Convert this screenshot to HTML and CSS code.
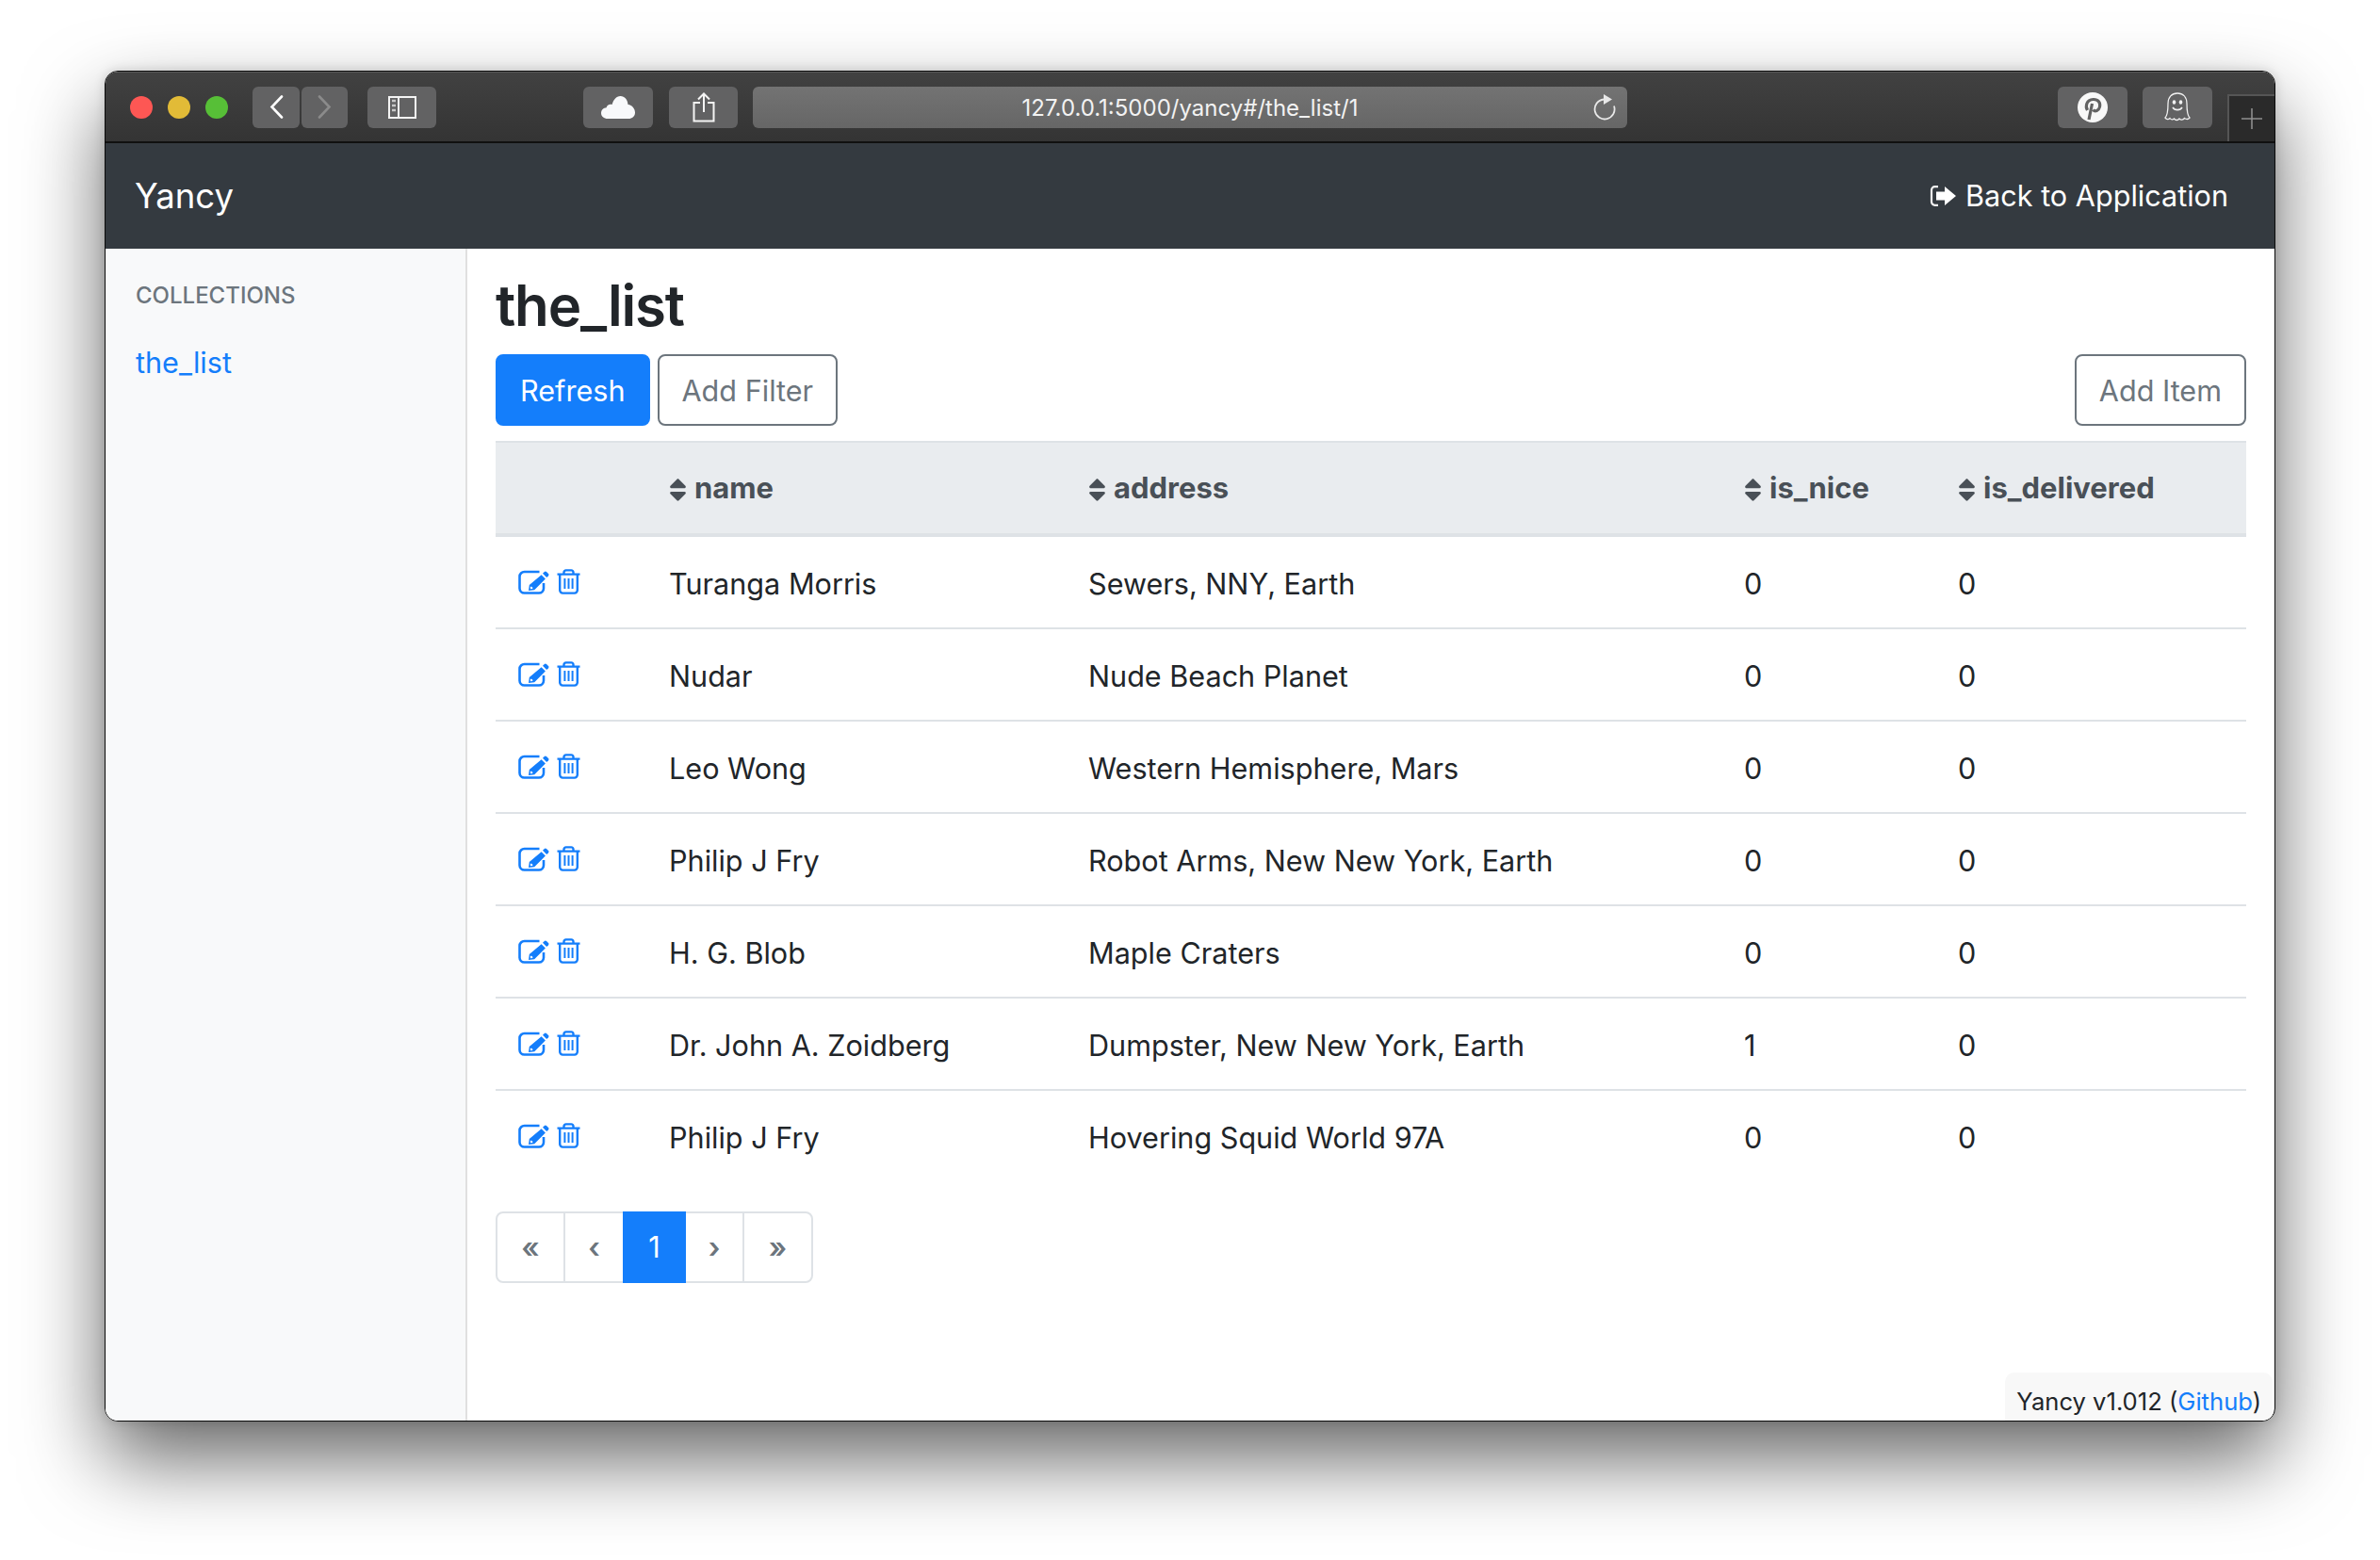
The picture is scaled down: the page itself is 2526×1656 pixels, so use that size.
FILE: index.html
```html
<!DOCTYPE html>
<html lang="en">
<head>
    <meta charset="UTF-8">
    <title>Yancy</title>
    <link rel="stylesheet" href="styles.css">
</head>
<body>
    <svg class="sprites" width="0" height="0">
        <symbol id="icon-edit" viewBox="0 0 33 26">
            <path d="M22.5 2H6.5A5 5 0 0 0 1.5 7V19.5a5 5 0 0 0 5 5H22a5 5 0 0 0 5-5V14" fill="none" stroke="currentColor" stroke-width="2.6"/>
            <path d="M24.6 5.2L28.9 9.5 17.2 21.2 11 22 11.8 16.1ZM12.8 18.2L13 20.2 15 20 15.6 19 13.8 17.6Z" fill="currentColor" fill-rule="evenodd"/>
            <path d="M26 3.8L27.8 2a1.6 1.6 0 0 1 2.2 0L32 4a1.6 1.6 0 0 1 0 2.2L30.2 8Z" fill="currentColor"/>
        </symbol>
        <symbol id="icon-trash" viewBox="0 0 25 27">
            <path d="M.5 5.6H24.5M7.5 5V3.6a2.2 2.2 0 0 1 2.2-2.2h5.6a2.2 2.2 0 0 1 2.2 2.2V5M3.2 5.6V22.6a3 3 0 0 0 3 3H18.8a3 3 0 0 0 3-3V5.6" fill="none" stroke="currentColor" stroke-width="2.4"/>
            <path d="M8.4 10V21M12.5 10V21M16.6 10V21" fill="none" stroke="currentColor" stroke-width="2"/>
        </symbol>
        <symbol id="icon-sort" viewBox="0 0 320 512">
            <path d="M41 288h238c21.4 0 32.1 25.9 17 41L177 448c-9.4 9.4-24.6 9.4-33.9 0L24 329c-15.1-15.1-4.4-41 17-41zm255-105L177 64c-9.4-9.4-24.6-9.4-33.9 0L24 183c-15.1 15.1-4.4 41 17 41h238c21.4 0 32.1-25.9 17-41z" fill="currentColor"/>
        </symbol>
    </svg>

    <div class="window">
        <div class="toolbar">
            <div class="lights">
                <span class="light red"></span>
                <span class="light yellow"></span>
                <span class="light green"></span>
            </div>
            <div class="tool tool-back">
                <svg width="15" height="25" viewBox="0 0 15 25"><path d="M13 1.5L2.5 12.5 13 23.5" fill="none" stroke="#fff" stroke-width="2.6" stroke-linecap="round"/></svg>
            </div>
            <div class="tool tool-forward">
                <svg width="15" height="25" viewBox="0 0 15 25"><path d="M2 1.5L12.5 12.5 2 23.5" fill="none" stroke="#8b8b8b" stroke-width="2.6" stroke-linecap="round"/></svg>
            </div>
            <div class="tool tool-sidebar">
                <svg width="30" height="24" viewBox="0 0 30 24"><path d="M1 1H29V23H1ZM11 1V23" fill="none" stroke="#f4f4f4" stroke-width="2"/><path d="M4 5H8M4 10H8M4 15H8" stroke="#c8c8c8" stroke-width="2.4"/></svg>
            </div>
            <div class="tool tool-cloud">
                <svg width="36" height="24" viewBox="0 0 36 24"><path d="M7 24C3 24 0 21.5 0 18 0 14.8 2.5 12.4 5.6 12.2 6.2 9.4 9 8 11.6 9 13 4 16 0 20.5 0 25 0 28 3.5 28.5 9 33 9.6 36 13.4 36 17.5 36 21.5 33 24 29 24Z" fill="#f8f9fb"/></svg>
            </div>
            <div class="tool tool-share">
                <svg width="24" height="32" viewBox="0 0 24 32"><path d="M8 11H1.5V30.5H22.5V11H16M12 21V2M6 7.5L12 1.5 18 7.5" fill="none" stroke="#f4f4f4" stroke-width="2"/></svg>
            </div>
            <div class="address">
                <span class="url">127.0.0.1:5000/yancy#/the_list/1</span>
                <svg class="reload" width="24" height="28" viewBox="0 0 24 28"><path d="M11 5.5A10.5 10.5 0 1 0 22 12.5" fill="none" stroke="#e8e8e8" stroke-width="1.8"/><path d="M11 0L20 5.5 11 11Z" fill="#e8e8e8"/></svg>
            </div>
            <div class="tool tool-pin">
                <svg width="32" height="32" viewBox="0 0 32 32"><circle cx="16" cy="16" r="16" fill="#f8f8f8"/><path d="M10.5 19C8 14.5 9.5 8 16.5 7.5 22 7.2 24.5 11 23.5 15.5 22.6 19.5 18.5 21 16.5 18.5M15.5 12L12 29" fill="none" stroke="#636363" stroke-width="3.2"/></svg>
            </div>
            <div class="tool tool-ghost">
                <svg width="28" height="31" viewBox="0 0 28 31"><path d="M1 27C3 25 4 22 4 12 4 5 8 1 14 1S24 5 24 12C24 22 25 25 27 27 25 29.5 23 28.5 21.5 27.5 20 29.5 17.5 29.5 16 28 14.5 30 12 30 10.5 28 9 29.5 7 29 6 27.5 4.5 29 2.5 29 1 27Z" fill="none" stroke="#f0f0f0" stroke-width="1.3"/><ellipse cx="10.5" cy="10.5" rx="1.8" ry="2.2" fill="#f0f0f0"/><ellipse cx="17.5" cy="10.5" rx="1.8" ry="2.2" fill="#f0f0f0"/><path d="M9 16C11 19.5 17 19.5 19 16" fill="none" stroke="#f0f0f0" stroke-width="1.6"/></svg>
            </div>
            <div class="new-tab">
                <svg width="22" height="22" viewBox="0 0 22 22"><path d="M11 0V22M0 11H22" stroke="#8f8f8f" stroke-width="1.6"/></svg>
            </div>
        </div>

        <nav class="navbar">
            <a class="brand">Yancy</a>
            <a class="back-link">
                <svg width="28" height="24" viewBox="0 0 28 24"><path d="M9 2.2H5.5A3.5 3.5 0 0 0 2 5.7V18.3a3.5 3.5 0 0 0 3.5 3.5H9" fill="none" stroke="#f4f4f4" stroke-width="2.2"/><path d="M16 2L28 12 16 22V16.5H7V7.5H16Z" fill="#fff"/></svg>
                <span>Back to Application</span>
            </a>
        </nav>

        <div class="layout">
            <aside class="sidebar">
                <h6 class="sidebar-heading">COLLECTIONS</h6>
                <a class="sidebar-link">the_list</a>
            </aside>

            <main class="content">
                <h2 class="title">the_list</h2>
                <div class="actions">
                    <button class="btn btn-primary">Refresh</button>
                    <button class="btn btn-outline">Add Filter</button>
                    <button class="btn btn-outline btn-right">Add Item</button>
                </div>

                <table class="items">
                    <colgroup>
                        <col class="col-tools">
                        <col class="col-name">
                        <col class="col-address">
                        <col class="col-nice">
                        <col class="col-delivered">
                    </colgroup>
                    <thead>
                        <tr>
                            <th></th>
                            <th><svg class="sort"><use href="#icon-sort"/></svg>name</th>
                            <th><svg class="sort"><use href="#icon-sort"/></svg>address</th>
                            <th><svg class="sort"><use href="#icon-sort"/></svg>is_nice</th>
                            <th><svg class="sort"><use href="#icon-sort"/></svg>is_delivered</th>
                        </tr>
                    </thead>
                    <tbody>
                        <tr>
                            <td class="tools"><svg class="edit"><use href="#icon-edit"/></svg><svg class="trash"><use href="#icon-trash"/></svg></td>
                            <td>Turanga Morris</td><td>Sewers, NNY, Earth</td><td>0</td><td>0</td>
                        </tr>
                        <tr>
                            <td class="tools"><svg class="edit"><use href="#icon-edit"/></svg><svg class="trash"><use href="#icon-trash"/></svg></td>
                            <td>Nudar</td><td>Nude Beach Planet</td><td>0</td><td>0</td>
                        </tr>
                        <tr>
                            <td class="tools"><svg class="edit"><use href="#icon-edit"/></svg><svg class="trash"><use href="#icon-trash"/></svg></td>
                            <td>Leo Wong</td><td>Western Hemisphere, Mars</td><td>0</td><td>0</td>
                        </tr>
                        <tr>
                            <td class="tools"><svg class="edit"><use href="#icon-edit"/></svg><svg class="trash"><use href="#icon-trash"/></svg></td>
                            <td>Philip J Fry</td><td>Robot Arms, New New York, Earth</td><td>0</td><td>0</td>
                        </tr>
                        <tr>
                            <td class="tools"><svg class="edit"><use href="#icon-edit"/></svg><svg class="trash"><use href="#icon-trash"/></svg></td>
                            <td>H. G. Blob</td><td>Maple Craters</td><td>0</td><td>0</td>
                        </tr>
                        <tr>
                            <td class="tools"><svg class="edit"><use href="#icon-edit"/></svg><svg class="trash"><use href="#icon-trash"/></svg></td>
                            <td>Dr. John A. Zoidberg</td><td>Dumpster, New New York, Earth</td><td>1</td><td>0</td>
                        </tr>
                        <tr>
                            <td class="tools"><svg class="edit"><use href="#icon-edit"/></svg><svg class="trash"><use href="#icon-trash"/></svg></td>
                            <td>Philip J Fry</td><td>Hovering Squid World 97A</td><td>0</td><td>0</td>
                        </tr>
                    </tbody>
                </table>

                <ul class="pagination">
                    <li class="page page-first">«</li>
                    <li class="page page-prev">‹</li>
                    <li class="page page-current">1</li>
                    <li class="page page-next">›</li>
                    <li class="page page-last">»</li>
                </ul>
            </main>
        </div>

        <div class="version">Yancy v1.012 (<a class="version-link">Github</a>)</div>
    </div>
</body>
</html>
```

FILE: styles.css
```css
* {
    box-sizing: border-box;
}

body {
    margin: 0;
    padding: 75px 111px 0 111px;
    height: 1656px;
    overflow: hidden;
    background-color: #ffffff;
    color: #212529;
    font-family: Inter, "Noto Sans", sans-serif;
    font-size: 30.6px;
    line-height: 48px;
}

.sprites {
    position: absolute;
}

/* Browser window */
.window {
    position: relative;
    width: 2304px;
    height: 1434px;
    border: 1px solid #0a0a0a;
    border-radius: 14px;
    overflow: hidden;
    display: flex;
    flex-direction: column;
    background-color: #ffffff;
    box-shadow: 0 40px 85px rgba(0, 0, 0, 0.6), 0 0 12px rgba(0, 0, 0, 0.15);
}

.toolbar {
    flex: none;
    height: 76px;
    display: flex;
    align-items: center;
    padding-left: 26px;
    background: linear-gradient(#414141, #343434);
    border-top: 1px solid #5a5a5a;
    border-bottom: 2px solid #101010;
}

.lights {
    display: flex;
    gap: 16px;
    margin-right: 26px;
}

.light {
    width: 24px;
    height: 24px;
    border-radius: 50%;
}

.red {
    background-color: #fd5754;
}

.yellow {
    background-color: #e2bb37;
}

.green {
    background-color: #57bf37;
}

.tool {
    flex: none;
    height: 44px;
    display: flex;
    align-items: center;
    justify-content: center;
    border-radius: 6px;
    background-color: #626263;
}

.tool-back {
    width: 50px;
    margin-right: 2px;
}

.tool-forward {
    width: 49px;
    margin-right: 21px;
}

.tool-sidebar {
    width: 73px;
    margin-right: 156px;
}

.tool-cloud {
    width: 74px;
    margin-right: 17px;
}

.tool-share {
    width: 73px;
    margin-right: 16px;
}

.address {
    position: relative;
    flex: none;
    width: 928px;
    height: 44px;
    display: flex;
    align-items: center;
    justify-content: center;
    padding-top: 2px;
    border-radius: 6px;
    background: linear-gradient(#737373, #666666);
}

.url {
    color: #f2f2f2;
    font-size: 24px;
    line-height: 30px;
}

.reload {
    position: absolute;
    right: 12px;
    top: 8px;
}

.tool-pin {
    width: 74px;
    margin-left: auto;
    margin-right: 16px;
}

.tool-ghost {
    width: 74px;
    margin-right: 16px;
}

.new-tab {
    flex: none;
    align-self: flex-end;
    width: 50px;
    height: 50px;
    display: flex;
    align-items: center;
    justify-content: center;
    background-color: #2a2a2a;
    border-top: 2px solid #555555;
    border-left: 2px solid #555555;
}

.navbar {
    flex: none;
    height: 112px;
    display: flex;
    align-items: center;
    justify-content: space-between;
    padding: 0 49px 0 31px;
    background-color: #343a40;
    color: #ffffff;
}

.brand {
    font-size: 36.5px;
}

.back-link {
    display: flex;
    align-items: center;
    gap: 10px;
}

.layout {
    flex: 1;
    display: flex;
}

.sidebar {
    flex: none;
    width: 384px;
    padding: 33px 32px;
    background-color: #f8f9fa;
    border-right: 2px solid #e0e0e0;
}

.sidebar-heading {
    margin: 0 0 30px;
    color: #6c757d;
    font-size: 24px;
    font-weight: 500;
    line-height: 34px;
}

.sidebar-link {
    color: #147efb;
}

.content {
    flex: 1;
    padding: 22px 30px 0 30px;
}

.title {
    margin: 0 0 13px;
    font-size: 60px;
    font-weight: 600;
    letter-spacing: -1.2px;
    line-height: 77px;
}

.actions {
    display: flex;
    gap: 8px;
    margin-bottom: 16px;
}

.btn {
    height: 76px;
    padding: 0 24px;
    border: 2px solid #6c757d;
    border-radius: 8px;
    background-color: #ffffff;
    color: #6c757d;
    font-family: inherit;
    font-size: 30.6px;
}

.btn-primary {
    background-color: #147efb;
    border-color: #147efb;
    color: #ffffff;
}

.btn-right {
    margin-left: auto;
}

.items {
    width: 100%;
    table-layout: fixed;
    border-collapse: collapse;
}

.col-tools {
    width: 160px;
}

.col-name {
    width: 445px;
}

.col-address {
    width: 696px;
}

.col-nice {
    width: 227px;
}

.col-delivered {
    width: 330px;
}

.items th {
    padding: 24px;
    text-align: left;
    font-size: 31px;
    font-weight: 700;
    background-color: #e9ecef;
    color: #495057;
    border-top: 2px solid #dee2e6;
    border-bottom: 4px solid #dee2e6;
}

.items td {
    padding: 26px 24px 22px;
    border-top: 2px solid #dee2e6;
}

.sort {
    width: 19px;
    height: 30px;
    margin-right: 8px;
    vertical-align: -6px;
}

.tools {
    color: #147efb;
}

.items .tools {
    padding-right: 0;
}

.edit {
    width: 33px;
    height: 26px;
    margin-right: 8px;
}

.trash {
    width: 25px;
    height: 27px;
}

.pagination {
    display: flex;
    width: 337px;
    height: 76px;
    margin: 32px 0 0;
    padding: 0;
    list-style: none;
    border: 2px solid #dee2e6;
    border-radius: 8px;
    color: #6c757d;
}

.page {
    display: flex;
    align-items: center;
    justify-content: center;
    font-weight: 600;
}

.page-first {
    width: 72px;
    border-right: 2px solid #dee2e6;
}

.page-prev {
    width: 61px;
}

.page-current {
    width: 67px;
    margin: -2px 0;
    background-color: #147efb;
    color: #ffffff;
    font-weight: 400;
}

.page-next {
    width: 62px;
    border-right: 2px solid #dee2e6;
}

.page-last {
    width: 71px;
}

.version {
    position: absolute;
    right: 2px;
    bottom: 0;
    padding: 12px 12px 0;
    height: 51px;
    border-radius: 10px 10px 0 0;
    background-color: #f8f8f8;
    font-size: 25.6px;
    line-height: 38px;
}

.version-link {
    color: #147efb;
}
```
